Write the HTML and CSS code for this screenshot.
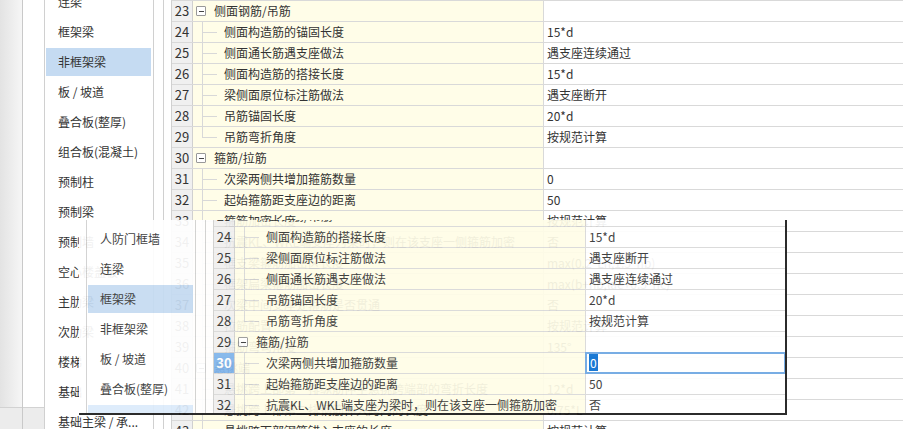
FILE: index.html
```html
<!DOCTYPE html>
<html lang="zh-CN">
<head>
  <meta charset="UTF-8" />
  <meta name="viewport" content="width=device-width, initial-scale=1.0">
  <title>计算设置 - 梁</title>
  <link rel="stylesheet" href="styles.css">
</head>
<body>

  <!-- main settings window -->
  <div class="window">
    <div class="shadow"><div class="foot"></div></div>
    <div class="pad"><div class="foot"></div></div>

    <div class="pane">
      <div class="cat-list main">
        <div class="cat">连梁</div>
        <div class="cat">框架梁</div>
        <div class="cat selected">非框架梁</div>
        <div class="cat">板 / 坡道</div>
        <div class="cat">叠合板(整厚)</div>
        <div class="cat">组合板(混凝土)</div>
        <div class="cat">预制柱</div>
        <div class="cat">预制梁</div>
        <div class="cat">预制墙</div>
        <div class="cat">空心楼盖板</div>
        <div class="cat">主肋梁</div>
        <div class="cat">次肋梁</div>
        <div class="cat">楼梯</div>
        <div class="cat">基础</div>
        <div class="cat">基础主梁 / 承...</div>
      </div>
      <div class="splitter"></div>
      <div class="gutter"></div>

      <div class="grid">
        <div class="row"><div class="num">23</div><div class="tree group"><span class="toggle"></span>侧面钢筋/吊筋</div><div class="value"></div></div>
        <div class="row"><div class="num">24</div><div class="tree child">侧面构造筋的锚固长度</div><div class="value">15*d</div></div>
        <div class="row"><div class="num">25</div><div class="tree child">侧面通长筋遇支座做法</div><div class="value">遇支座连续通过</div></div>
        <div class="row"><div class="num">26</div><div class="tree child">侧面构造筋的搭接长度</div><div class="value">15*d</div></div>
        <div class="row"><div class="num">27</div><div class="tree child">梁侧面原位标注筋做法</div><div class="value">遇支座断开</div></div>
        <div class="row"><div class="num">28</div><div class="tree child">吊筋锚固长度</div><div class="value">20*d</div></div>
        <div class="row"><div class="num">29</div><div class="tree child last">吊筋弯折角度</div><div class="value">按规范计算</div></div>
        <div class="row"><div class="num">30</div><div class="tree group"><span class="toggle"></span>箍筋/拉筋</div><div class="value"></div></div>
        <div class="row"><div class="num">31</div><div class="tree child">次梁两侧共增加箍筋数量</div><div class="value">0</div></div>
        <div class="row"><div class="num">32</div><div class="tree child">起始箍筋距支座边的距离</div><div class="value">50</div></div>
        <div class="row"><div class="num">33</div><div class="tree child">箍筋加密长度</div><div class="value">按规范计算</div></div>
        <div class="row"><div class="num">34</div><div class="tree child">抗震KL、WKL端支座为梁时，则在该支座一侧箍筋加密</div><div class="value">否</div></div>
        <div class="row"><div class="num">35</div><div class="tree child">框支梁箍筋加密区长度</div><div class="value">max(0.2*Ln,1.5*hb)</div></div>
        <div class="row"><div class="num">36</div><div class="tree child">框架扁梁箍筋加密长度</div><div class="value">max(b+hb,lae+0.5*hc)</div></div>
        <div class="row"><div class="num">37</div><div class="tree child">次梁中间支座处箍筋是否贯通</div><div class="value">否</div></div>
        <div class="row"><div class="num">38</div><div class="tree child">拉筋配置</div><div class="value">按规范计算</div></div>
        <div class="row"><div class="num">39</div><div class="tree child last">箍筋弯勾角度</div><div class="value">135°</div></div>
        <div class="row"><div class="num">40</div><div class="tree group"><span class="toggle"></span>悬挑端</div><div class="value"></div></div>
        <div class="row"><div class="num">41</div><div class="tree child">悬挑跨上部第一排纵筋伸至悬挑跨端部的弯折长度</div><div class="value">12*d</div></div>
        <div class="row"><div class="num">42</div><div class="tree child">悬挑跨上部第二排钢筋伸入跨内的长度</div><div class="value">0.75*L</div></div>
        <div class="row"><div class="num">43</div><div class="tree child">悬挑跨下部钢筋锚入支座的长度</div><div class="value">按规范计算</div></div>
      </div>
    </div>
  </div>

  <!-- second window lying over the first one -->
  <div class="overlay">
    <div class="pane">
      <div class="cat-list">
        <div class="cat">人防门框墙</div>
        <div class="cat">连梁</div>
        <div class="cat selected">框架梁</div>
        <div class="cat">非框架梁</div>
        <div class="cat">板 / 坡道</div>
        <div class="cat">叠合板(整厚)</div>
        <div class="cat hover">组合板(混凝土)</div>
      </div>
      <div class="splitter"></div>
      <div class="gutter"></div>

      <div class="grid">
        <div class="row"><div class="num">23</div><div class="tree group"><span class="toggle"></span>侧面钢筋/吊筋</div><div class="value"></div></div>
        <div class="row"><div class="num">24</div><div class="tree child">侧面构造筋的搭接长度</div><div class="value">15*d</div></div>
        <div class="row"><div class="num">25</div><div class="tree child">梁侧面原位标注筋做法</div><div class="value">遇支座断开</div></div>
        <div class="row"><div class="num">26</div><div class="tree child">侧面通长筋遇支座做法</div><div class="value">遇支座连续通过</div></div>
        <div class="row"><div class="num">27</div><div class="tree child">吊筋锚固长度</div><div class="value">20*d</div></div>
        <div class="row"><div class="num">28</div><div class="tree child last">吊筋弯折角度</div><div class="value">按规范计算</div></div>
        <div class="row"><div class="num">29</div><div class="tree group"><span class="toggle"></span>箍筋/拉筋</div><div class="value"></div></div>
        <div class="row"><div class="num current">30</div><div class="tree child">次梁两侧共增加箍筋数量</div><div class="value editing"><span class="sel">0</span></div></div>
        <div class="row"><div class="num">31</div><div class="tree child">起始箍筋距支座边的距离</div><div class="value">50</div></div>
        <div class="row"><div class="num">32</div><div class="tree child">抗震KL、WKL端支座为梁时，则在该支座一侧箍筋加密</div><div class="value">否</div></div>
        <div class="row"><div class="num">33</div><div class="tree child">箍筋加密长度</div><div class="value">按规范计算</div></div>
      </div>
    </div>
  </div>

</body>
</html>
```

FILE: styles.css
```css
body {
  margin: 0;
  width: 903px;
  height: 429px;
  overflow: hidden;
  position: relative;
  background: #fff;
  font-family: "Noto Sans CJK SC", "Liberation Sans", sans-serif;
  font-size: 12px;
  color: #333;
}

.window {
  display: flex;
  height: 429px;
}

.shadow {
  width: 22px;
  border-right: 1px solid #c9c9c9;
  background: linear-gradient(to right, #e3e3e3, #f6f6f6);
  display: flex;
  flex-direction: column;
  justify-content: flex-end;
}

.pad {
  width: 21px;
  display: flex;
  flex-direction: column;
  justify-content: flex-end;
}

.foot {
  height: 21px;
  border-top: 1px solid #d2d2d2;
  background: #ececec;
}

.pane {
  display: flex;
  flex: 1;
  min-width: 0;
}

/* category list on the left */
.cat-list {
  width: 108px;
  flex: none;
  border-left: 1px solid #d0d0d0;
  border-right: 1px solid #d0d0d0;
  overflow: hidden;
}

.main .cat:first-child {
  margin-top: -12px;
}

.cat {
  width: 105px;
  height: 28px;
  line-height: 28px;
  margin: 0 0 2px 1px;
  padding-left: 12px;
  box-sizing: border-box;
  white-space: nowrap;
  overflow: hidden;
}

.cat.selected {
  background: #c5dbf2;
}

.cat.hover {
  background: #dcebfb;
}

.splitter {
  width: 9px;
  flex: none;
  border-right: 1px solid #d0d0d0;
}

.gutter {
  width: 7px;
  flex: none;
}

/* settings grid */
.grid {
  flex: 1;
  min-width: 0;
  border-left: 1px solid #d0d0d0;
  border-top: 1px solid #d9d9d9;
  overflow: hidden;
}

.row {
  display: flex;
  height: 21px;
  box-sizing: border-box;
  border-bottom: 1px solid #d9d9d9;
  line-height: 20px;
}

.num {
  width: 21px;
  flex: none;
  box-sizing: border-box;
  background: #f0f0f0;
  border-right: 1px solid #d0d0d0;
  text-align: center;
  font-size: 13px;
}

.num.current {
  background: #80b4ec;
  color: #fff;
  font-weight: bold;
}

.tree {
  width: 351px;
  flex: none;
  box-sizing: border-box;
  background: #fffde8;
  border-right: 1px solid #d9d9d9;
  white-space: nowrap;
  overflow: hidden;
}

.group {
  display: flex;
  align-items: center;
  padding-left: 3px;
}

.toggle {
  width: 8px;
  height: 8px;
  margin-right: 8px;
  border: 1px solid #999;
  border-radius: 1px;
  background: linear-gradient(#444, #444) center / 5px 1px no-repeat, #fff;
}

.child {
  padding-left: 31px;
  background:
    linear-gradient(#d8d8d8, #d8d8d8) 9px 0 / 1px 100% no-repeat,
    linear-gradient(#d8d8d8, #d8d8d8) 9px 10px / 15px 1px no-repeat,
    #fffde8;
}

.child.last {
  background-size: 1px 10px, 15px 1px;
}

.value {
  flex: 1;
  padding-left: 3px;
  white-space: nowrap;
  overflow: hidden;
  background: #fff;
}

.value.editing {
  box-shadow: 0 0 0 1px #6ea7e3, inset 0 0 0 1px #6ea7e3;
}

.sel {
  background: #0a6fd1;
  color: #fff;
  padding: 0 1px;
}

/* the window lying over the main one, a little see-through */
.overlay {
  position: absolute;
  left: 79px;
  top: 220px;
  width: 699px;
  height: 193px;
  padding-left: 7px;
  border-right: 2px solid #1c1c1c;
  border-bottom: 2px solid #1c1c1c;
  background: #fff;
  opacity: 0.93;
  overflow: hidden;
  display: flex;
}

.overlay .cat-list {
  padding-top: 5px;
}

.overlay .grid {
  margin-top: -15px;
}
```
